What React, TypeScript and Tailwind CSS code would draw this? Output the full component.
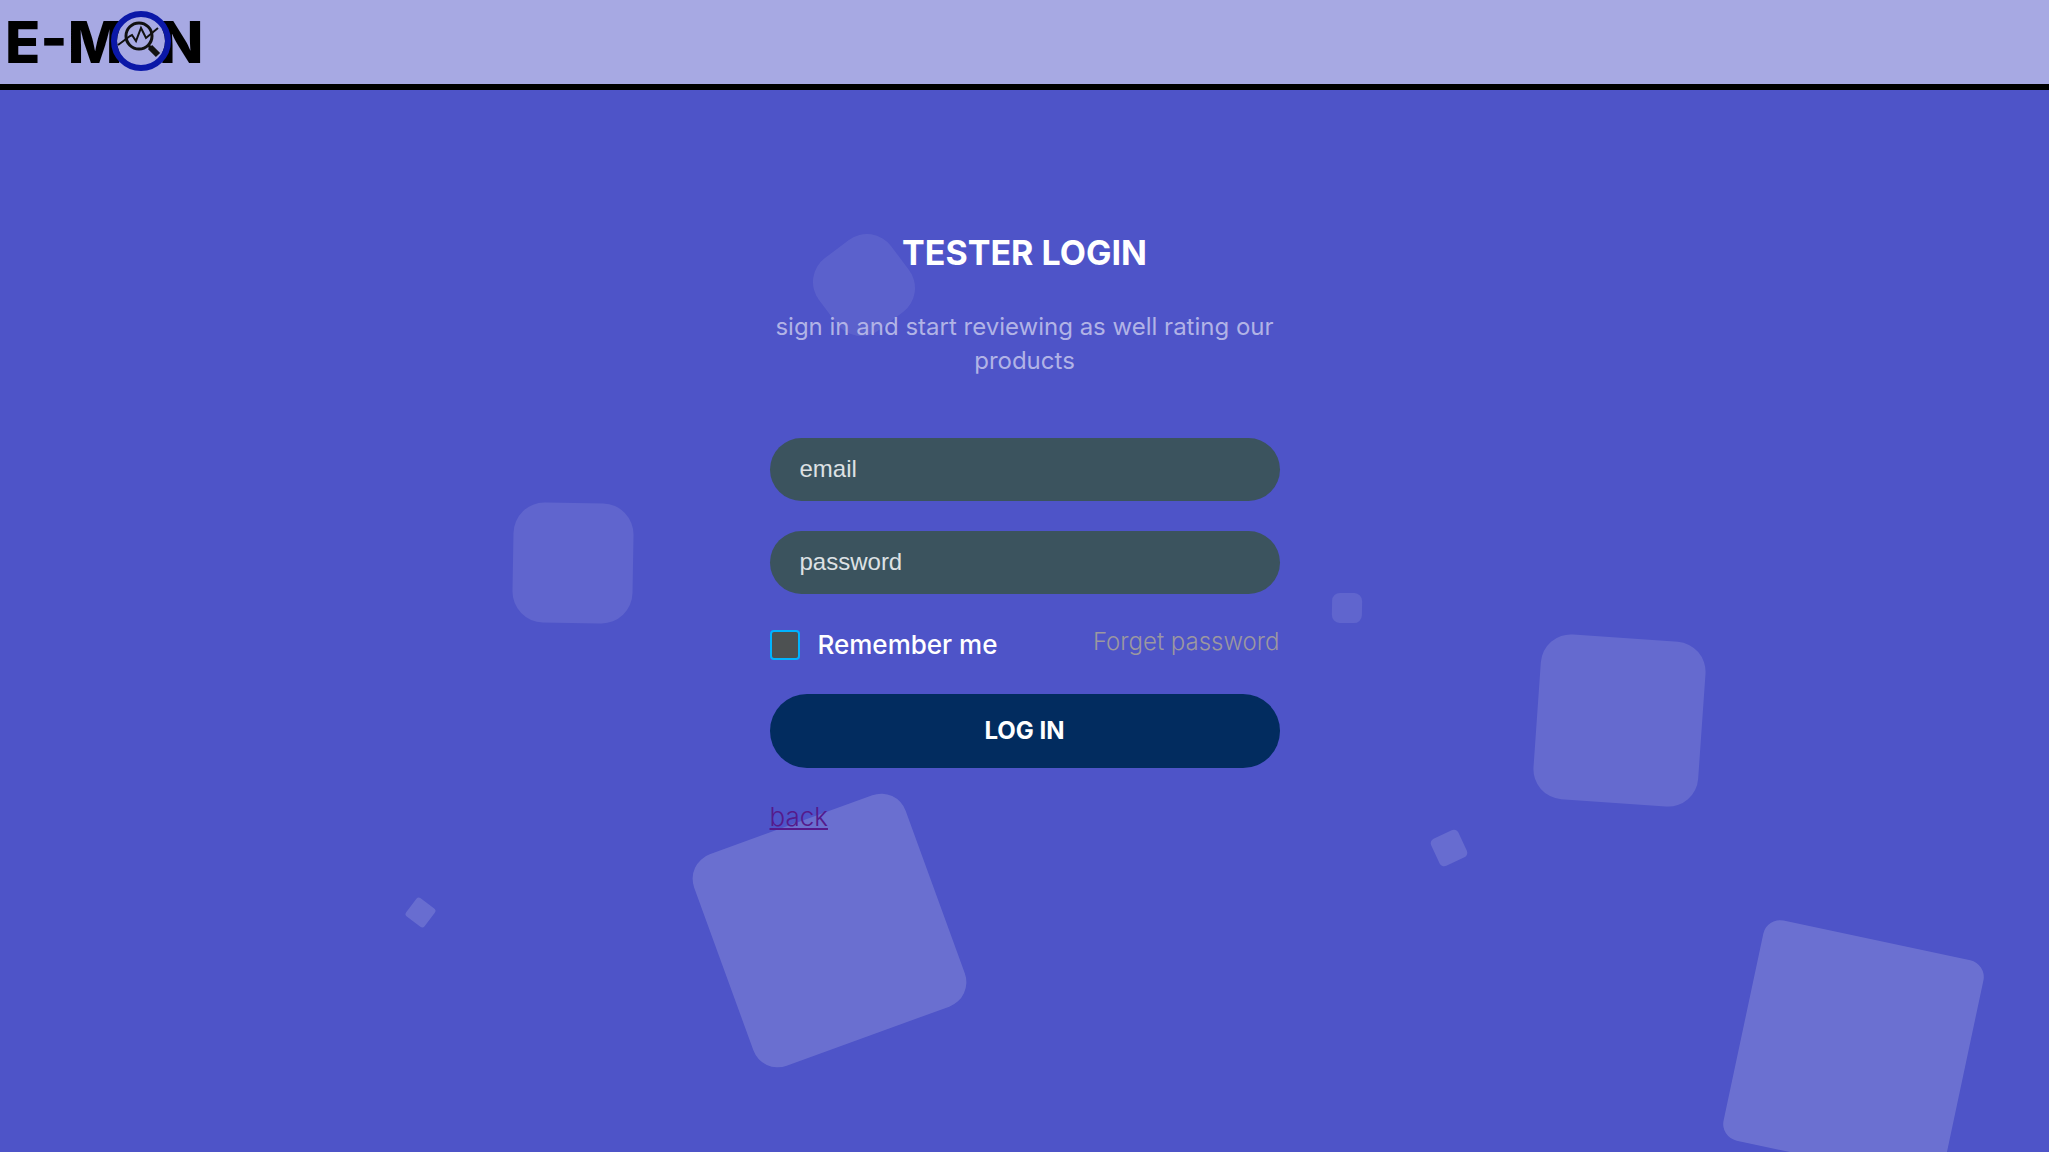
const SQUARES = [
  'left-[513px] top-[503px] size-[120px] rounded-[31px] rotate-[1deg] bg-white/10',
  'left-[409px] top-[901px] size-[23px] rounded-[3px] rotate-[37deg] bg-white/15',
  'left-[1332px] top-[593px] size-[30px] rounded-[8px] rotate-[1deg] bg-white/10',
  'left-[819px] top-[240px] size-[90px] rounded-[30px] rotate-[53deg] bg-white/8',
  'left-[1434px] top-[833px] size-[30px] rounded-[5px] rotate-[-25deg] bg-white/14',
  'left-[1537px] top-[638px] size-[165px] rounded-[30px] rotate-[4deg] bg-white/13',
  'left-[717px] top-[818px] size-[225px] rounded-[26px] rotate-[-20deg] bg-white/16',
  'left-[1741px] top-[938px] size-[225px] rounded-[17px] rotate-[12deg] bg-white/17',
]

const FIELD =
  "block h-[63px] w-full rounded-full bg-[#3b535e] px-[30px] pb-[2px] font-['Liberation_Sans',sans-serif] text-[24px] text-white placeholder:text-[#dde1e4]"

function Logo() {
  return (
    <svg viewBox="0 0 210 84" className="h-[84px] w-[210px]" role="img" aria-label="E-MON">
      <g className="font-['Inter',sans-serif] text-[58px] font-extrabold" fill="#000">
        <text x="5" y="63">E-M</text>
        <text x="159" y="63">N</text>
      </g>
      <circle cx="141" cy="41" r="24" fill="#a7a9e3" />
      <circle cx="141" cy="41" r="27" fill="none" stroke="#0b18a8" strokeWidth="6" />
      <circle cx="139" cy="36" r="13" fill="none" stroke="#111" strokeWidth="3" />
      <path d="M148 45L151 48" stroke="#111" strokeWidth="3" />
      <path d="M150 47L158 55" stroke="#111" strokeWidth="6" />
      <path
        d="M118 45L130 36L132 35L136 41L141 28L146 38L158 28"
        fill="none"
        stroke="#111"
        strokeWidth="2"
      />
    </svg>
  )
}

export default function App() {
  return (
    <div className="relative flex min-h-screen flex-col overflow-hidden border-b border-white bg-[#4e54c8] font-['Inter',sans-serif]">
      <header className="border-b-6 border-black bg-[#a7a9e3]">
        <Logo />
      </header>

      <div aria-hidden="true" className="absolute inset-0 overflow-hidden">
        {SQUARES.map((square) => (
          <span key={square} className={`absolute ${square}`} />
        ))}
      </div>

      <main className="relative mx-auto w-full max-w-[510px] pt-[133px]">
        <h1 className="text-center text-[34px] leading-[60px] font-bold text-white">TESTER LOGIN</h1>
        <p className="mt-[27px] text-center text-[24px] leading-[34px] text-[#b1b3e6]">
          sign in and start reviewing as well rating our products
        </p>
        <form className="mt-[60px]" onSubmit={(e) => e.preventDefault()}>
          <input type="email" aria-label="email" placeholder="email" className={FIELD} />
          <div className="mt-[30px]">
            <input type="password" aria-label="password" placeholder="password" className={FIELD} />
          </div>
          <div className="mt-[30px] flex h-[70px] items-start justify-between">
            <label className="flex items-center gap-[18px] pt-[1px] text-[26px] leading-[40px] font-medium text-white">
              <input
                type="checkbox"
                className="size-[30px] appearance-none rounded-[4px] border-2 border-[#00b4ff] bg-[#4d5152] checked:bg-[#00b4ff]"
              />
              Remember me
            </label>
            <a href="#forgot" className="text-[24px] leading-[36px] font-light text-[#9c98a0]">
              Forget password
            </a>
          </div>
          <button type="submit" className="block h-[74px] w-full rounded-full bg-[#022c5f] text-[24px] font-bold text-white">
            LOG IN
          </button>
        </form>
        <a href="#back" className="mt-[30px] inline-block text-[26px] leading-[38px] font-light text-[#551a8b] underline">
          back
        </a>
      </main>
    </div>
  )
}
